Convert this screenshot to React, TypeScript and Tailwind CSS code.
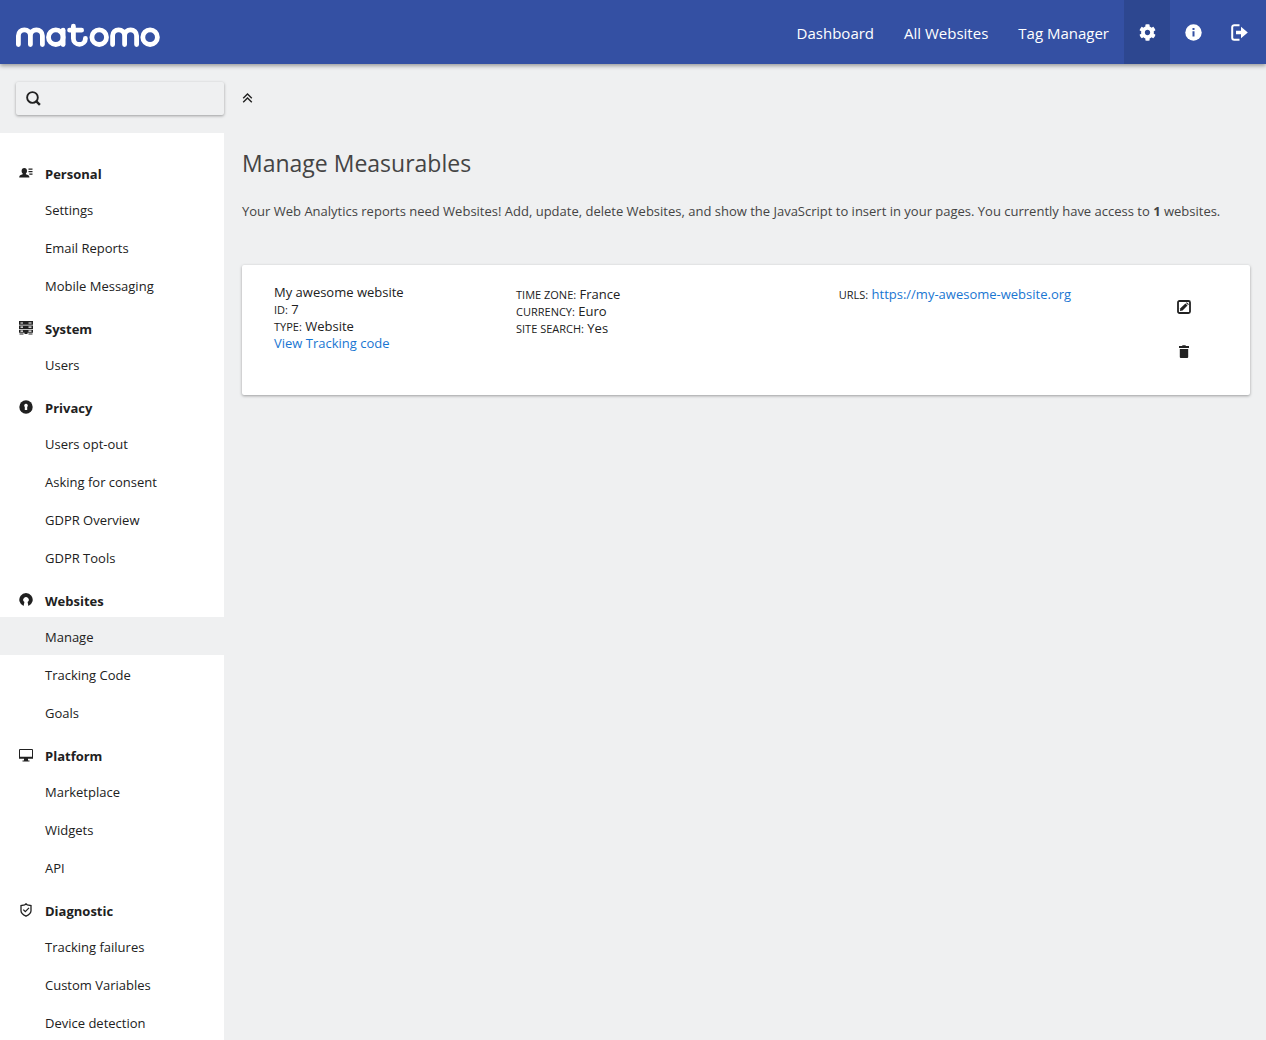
import type { ReactNode } from "react";
import { FaCog } from "react-icons/fa";

function Logo() {
  return (
    <svg
      width="144"
      height="24"
      viewBox="16 23 144 24"
      fill="none"
      stroke="#fff"
      strokeWidth="4.8"
      strokeLinecap="round"
      strokeLinejoin="round"
      aria-hidden="true"
    >
      <path d="M18.4 44.6V35.8a6 6 0 0 1 12 0v8.8M30.4 35.8a6 6 0 0 1 12 0v8.8" />
      <circle cx="55.8" cy="37.2" r="7.3" />
      <path d="M63.1 30.2v14.4" />
      <path d="M73.4 26.2v12.2a6 6 0 0 0 12 0M69.6 30.2h12" />
      <circle cx="99.2" cy="37.2" r="7.3" />
      <path d="M112.6 44.6V35.8a6 6 0 0 1 12 0v8.8M124.6 35.8a6 6 0 0 1 12 0v8.8" />
      <circle cx="150.1" cy="37.2" r="7.3" />
    </svg>
  );
}

const InfoIcon = () => (
  <svg width="17" height="17" viewBox="0 0 17 17" aria-hidden="true">
    <circle cx="8.5" cy="8.5" r="8.2" fill="currentColor" />
    <path d="M7.5 4h2v2h-2zM7.5 7.3h2v5.2h-2z" fill="#3450a3" />
  </svg>
);

const LogoutIcon = () => (
  <svg width="17" height="17" viewBox="0 0 17 17" fill="none" aria-hidden="true">
    <path d="M8.5 1.2H3.2a2 2 0 0 0-2 2v10.6a2 2 0 0 0 2 2h5.3" stroke="currentColor" strokeWidth="2" />
    <path d="M5 6.8h5V2.7L16.8 8.5 10 14.3v-4H5z" fill="currentColor" />
  </svg>
);

const SearchIcon = () => (
  <svg width="15" height="15" viewBox="0 0 16 16" fill="none" stroke="currentColor" aria-hidden="true">
    <circle cx="6.9" cy="6.9" r="5.7" strokeWidth="2" />
    <path d="M10.4 10.4l4.4 4.4" strokeWidth="2.6" />
  </svg>
);

const CollapseIcon = () => (
  <svg width="11" height="10" viewBox="0 0 11 10" fill="none" stroke="currentColor" strokeWidth="1.4" aria-hidden="true">
    <path d="M1.2 5.3l4.3-4.3 4.3 4.3M1.2 9.3L5.5 5l4.3 4.3" />
  </svg>
);

const EditIcon = () => (
  <svg width="14" height="14" viewBox="0 0 14 14" fill="none" aria-hidden="true">
    <rect x="1" y="1" width="12" height="12" rx="1.5" stroke="currentColor" strokeWidth="1.8" />
    <path d="M2.9 11.1l.5-2.8L8.4 3.5l2.1 2.1-4.9 4.9z" fill="currentColor" />
    <path d="M9 2.9l.8-.7 2.1 2.1-.8.7z" fill="currentColor" />
  </svg>
);

const TrashIcon = () => (
  <svg width="10" height="13" viewBox="0 0 10 13" fill="currentColor" aria-hidden="true">
    <path d="M0 1h3L3.6.2h2.8L7 1h3v1.9H0zM.8 3.9h8.4v8.1a1 1 0 0 1-1 1H1.8a1 1 0 0 1-1-1z" />
  </svg>
);

const PersonalIcon = () => (
  <svg width="14" height="14" viewBox="0 0 14 14" fill="currentColor" aria-hidden="true">
    <path d="M5.3 2c1.7 0 2.7 1.1 2.7 2.8 0 1.3-.5 2.2-1.1 2.8v.7c1.9.5 3.5 1 3.5 3.2H.2c0-2.2 1.6-2.7 3.5-3.2v-.7C3 7 2.6 6.1 2.6 4.8 2.6 3.1 3.6 2 5.3 2z" />
    <path d="M9.5 2.5h4v1.2h-4zM9.5 5h4v1.2h-4zM10.3 7.5h3.2v1.2h-3.2z" />
  </svg>
);

const SystemIcon = () => (
  <svg width="14" height="14" viewBox="0 0 14 14" fill="none" aria-hidden="true">
    <path d="M0 0h14v3.8H0zM0 4.5h14v3.5H0zM0 8.7h14v3H0zM5.5 11h3v2h-3zM.5 12.5h4v1h-4zM9.5 12.5h4v1h-4z" fill="currentColor" />
    <path d="M1.5 2H4M9.5 2h3M1.5 6.2H4M9.5 6.2h3M1.5 10.2H4M9.5 10.2h3" stroke="#fff" strokeWidth="1.2" />
  </svg>
);

const PrivacyIcon = () => (
  <svg width="14" height="14" viewBox="0 0 14 14" aria-hidden="true">
    <circle cx="7" cy="7" r="6.7" fill="currentColor" />
    <path d="M7 3.8a1.9 1.9 0 0 1 1.2 3.3V9.9H5.8V7.1A1.9 1.9 0 0 1 7 3.8z" fill="#fff" />
  </svg>
);

const WebsitesIcon = () => (
  <svg width="14" height="14" viewBox="0 0 14 14" fill="currentColor" aria-hidden="true">
    <path d="M4.6 13A6.7 6.7 0 1 1 9.4 13L8.6 9a2.7 2.7 0 1 0-3.2 0z" />
  </svg>
);

const PlatformIcon = () => (
  <svg width="14" height="14" viewBox="0 0 14 14" fill="none" aria-hidden="true">
    <path d="M.5 9.5V1.5h13v8" stroke="currentColor" strokeWidth="1" />
    <path d="M0 8.8h14v2H9v1.7h1.5v1h-7v-1H5v-1.7H0z" fill="currentColor" />
  </svg>
);

const DiagnosticIcon = () => (
  <svg width="14" height="14" viewBox="0 0 14 14" fill="none" stroke="currentColor" strokeWidth="1.3" aria-hidden="true">
    <path d="M7 .9l1.300.9 3.7.7v5.2c0 2.4-2 4.1-5 5.5-3-1.4-5-3.1-5-5.5V2.5l3.700-.7z" />
    <path d="M4.3 6.6l2 2 3.7-3.7" />
  </svg>
);

type Section = { title: string; icon: ReactNode; items: string[] };

const sections: Section[] = [
  { title: "Personal", icon: <PersonalIcon />, items: ["Settings", "Email Reports", "Mobile Messaging"] },
  { title: "System", icon: <SystemIcon />, items: ["Users"] },
  { title: "Privacy", icon: <PrivacyIcon />, items: ["Users opt-out", "Asking for consent", "GDPR Overview", "GDPR Tools"] },
  { title: "Websites", icon: <WebsitesIcon />, items: ["Manage", "Tracking Code", "Goals"] },
  { title: "Platform", icon: <PlatformIcon />, items: ["Marketplace", "Widgets", "API"] },
  { title: "Diagnostic", icon: <DiagnosticIcon />, items: ["Tracking failures", "Custom Variables", "Device detection"] },
];

function Header() {
  return (
    <header className="relative flex h-16 items-stretch justify-between bg-[#3450a3] pr-1 text-white shadow-[0_2px_4px_rgba(0,0,0,0.35)]">
      <a href="#" aria-label="Matomo" className="flex items-center pt-1.5 pl-4">
        <Logo />
      </a>
      <nav className="flex items-stretch text-[15px]">
        {["Dashboard", "All Websites", "Tag Manager"].map((label) => (
          <a key={label} href="#" className="flex items-center px-[15px] pt-0.5">
            {label}
          </a>
        ))}
        <a href="#" aria-label="Administration" className="flex w-[46px] items-center justify-center bg-[#2d4790]">
          <FaCog size={17} />
        </a>
        <a href="#" aria-label="Help" className="flex w-[46px] items-center justify-center">
          <InfoIcon />
        </a>
        <a href="#" aria-label="Sign out" className="flex w-[46px] items-center justify-center">
          <LogoutIcon />
        </a>
      </nav>
    </header>
  );
}

function Sidebar() {
  return (
    <nav className="bg-white pt-4">
      {sections.map((section) => (
        <section key={section.title}>
          <h3 className="flex h-[41px] items-start gap-3 pt-[17px] pl-[19px] leading-4 font-bold">
            {section.icon}
            {section.title}
          </h3>
          <ul>
            {section.items.map((item) => (
              <li key={item}>
                <a
                  href="#"
                  className={
                    item === "Manage"
                      ? "flex h-[38px] items-center bg-[#eff0f1] pt-[3px] pl-[45px]"
                      : "flex h-[38px] items-center pt-[3px] pl-[45px]"
                  }
                >
                  {item}
                </a>
              </li>
            ))}
          </ul>
        </section>
      ))}
    </nav>
  );
}

function Field({ label, children }: { label: string; children: ReactNode }) {
  return (
    <div>
      <span className="text-[11px] uppercase">{label}:</span> {children}
    </div>
  );
}

function SiteCard() {
  return (
    <article className="grid min-h-[130px] grid-cols-12 rounded-xs bg-white px-5 pt-[19px] leading-[17px] shadow-[0_1px_3px_rgba(0,0,0,0.35)]">
      <div className="col-span-3 px-3">
        <h4>My awesome website</h4>
        <Field label="ID">7</Field>
        <Field label="Type">Website</Field>
        <a href="#" className="text-[#1976d2]">
          View Tracking code
        </a>
      </div>
      <div className="col-span-4 px-3 pt-0.5">
        <Field label="Time zone">France</Field>
        <Field label="Currency">Euro</Field>
        <Field label="Site search">Yes</Field>
      </div>
      <div className="col-span-4 px-3 pt-0.5">
        <Field label="URLs">
          <a href="#" className="text-[#1976d2]">
            https://my-awesome-website.org
          </a>
        </Field>
      </div>
      <div className="col-span-1 flex flex-col items-start pl-3">
        <button type="button" aria-label="Edit" className="flex h-[45px] w-[46px] items-center justify-center">
          <EditIcon />
        </button>
        <button type="button" aria-label="Delete" className="flex h-[45px] w-[46px] items-center justify-center">
          <TrashIcon />
        </button>
      </div>
    </article>
  );
}

export default function App() {
  return (
    <div className="h-screen overflow-hidden bg-[#eff0f1] font-['Open_Sans',sans-serif] text-[13px] text-[#212121]">
      <Header />
      <div className="flex">
        <aside className="w-56 shrink-0">
          <label className="mt-[18px] mb-[18px] ml-4 flex h-[33px] items-center gap-2 rounded-xs pl-[10px] shadow-[0_1px_3px_rgba(0,0,0,0.35)]">
            <SearchIcon />
            <input type="text" aria-label="Search" className="w-0 flex-1 bg-transparent outline-none" />
          </label>
          <Sidebar />
        </aside>
        <main className="flex-1 pr-4 pl-[18px]">
          <button type="button" aria-label="Collapse" className="mt-7 block h-3">
            <CollapseIcon />
          </button>
          <h1 className="mt-[43px] text-[23px] leading-8 text-[#444]">Manage Measurables</h1>
          <p className="mt-[22px] mb-11 leading-5 text-[#444]">
            Your Web Analytics reports need Websites! Add, update, delete Websites, and show the JavaScript to insert in
            your pages. You currently have access to <strong>1</strong> websites.
          </p>
          <SiteCard />
        </main>
      </div>
    </div>
  );
}
